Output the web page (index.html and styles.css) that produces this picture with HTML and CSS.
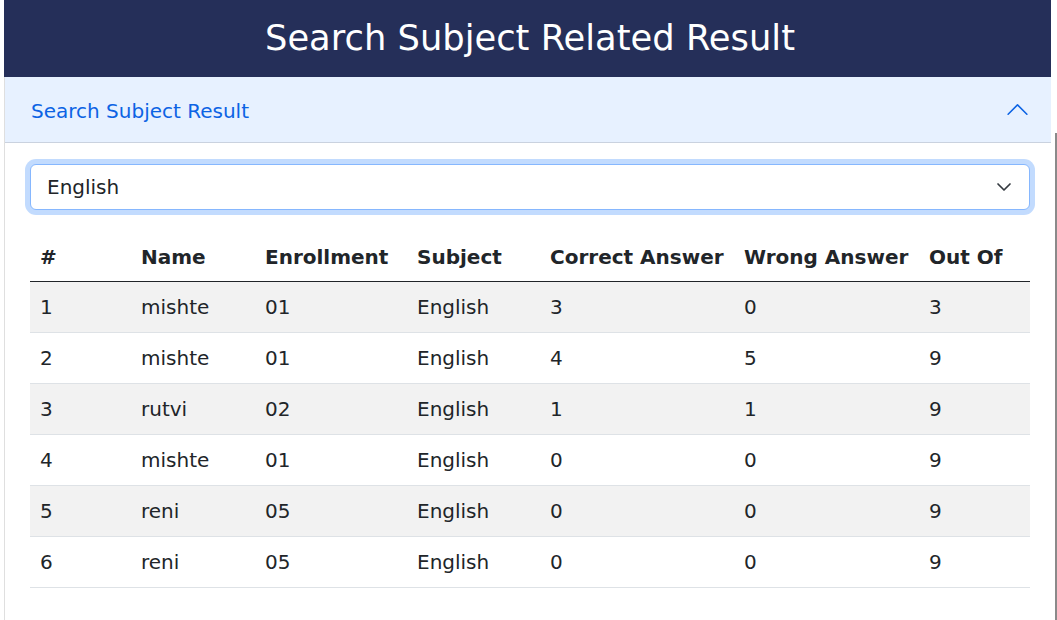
FILE: index.html
```html
<!DOCTYPE html>
<html lang="en">
<head>
<meta charset="utf-8">
<title>Search Subject Related Result</title>
<link rel="stylesheet" href="styles.css">
</head>
<body>
<div class="page">
  <main class="main">
    <header class="banner">
      <h1 class="banner-title">Search Subject Related Result</h1>
    </header>
    <section class="accordion-item">
      <button class="accordion-button" type="button">
        <span class="accordion-label">Search Subject Result</span>
        <svg class="accordion-icon" viewBox="0 0 16 16" width="25" height="25" aria-hidden="true">
          <path fill="#0c63e4" fill-rule="evenodd" d="M1.646 11.354a.5.5 0 0 0 .708 0L8 5.707l5.646 5.647a.5.5 0 0 0 .708-.708l-6-6a.5.5 0 0 0-.708 0l-6 6a.5.5 0 0 0 0 .708z"/>
        </svg>
      </button>
      <div class="accordion-body">
        <div class="select-wrap">
          <select class="form-select">
            <option>English</option>
          </select>
          <svg class="select-icon" viewBox="0 0 16 12" width="16" height="12" aria-hidden="true">
            <path fill="none" stroke="#343a40" stroke-linecap="round" stroke-linejoin="round" stroke-width="1.7" d="M2 3l6 6 6-6"/>
          </svg>
        </div>
        <table class="result-table">
          <colgroup>
            <col class="c-num"><col class="c-name"><col class="c-enr"><col class="c-sub"><col class="c-cor"><col class="c-wr"><col class="c-out">
          </colgroup>
          <thead>
            <tr><th>#</th><th>Name</th><th>Enrollment</th><th>Subject</th><th>Correct Answer</th><th>Wrong Answer</th><th>Out Of</th></tr>
          </thead>
          <tbody>
            <tr><td>1</td><td>mishte</td><td>01</td><td>English</td><td>3</td><td>0</td><td>3</td></tr>
            <tr><td>2</td><td>mishte</td><td>01</td><td>English</td><td>4</td><td>5</td><td>9</td></tr>
            <tr><td>3</td><td>rutvi</td><td>02</td><td>English</td><td>1</td><td>1</td><td>9</td></tr>
            <tr><td>4</td><td>mishte</td><td>01</td><td>English</td><td>0</td><td>0</td><td>9</td></tr>
            <tr><td>5</td><td>reni</td><td>05</td><td>English</td><td>0</td><td>0</td><td>9</td></tr>
            <tr><td>6</td><td>reni</td><td>05</td><td>English</td><td>0</td><td>0</td><td>9</td></tr>
          </tbody>
        </table>
      </div>
    </section>
  </main>
  <div class="gutter"><div class="gutter-bar"></div></div>
</div>
</body>
</html>
```

FILE: styles.css
```css
* { box-sizing: border-box; }
html, body { margin: 0; padding: 0; background: #fff; }
body {
  font-family: "DejaVu Sans", Verdana, sans-serif;
  font-size: 20px;
  color: #212529;
  overflow: hidden;
}
.page {
  display: flex;
  padding-left: 4px;
  min-height: 620px;
}
.main {
  width: 1047px;
  flex: none;
}
.gutter {
  flex: 1;
  display: flex;
  padding-left: 4px;
}
.gutter-bar {
  width: 2px;
  margin-top: 133px;
  background: #8a8a8a;
}
.banner {
  height: 77px;
  background: #252f59;
  display: flex;
  align-items: center;
  justify-content: center;
}
.banner-title {
  margin: 0;
  color: #fff;
  font-weight: 400;
  font-size: 35.3px;
  line-height: 1.2;
  padding-left: 5px;
  padding-top: 0;
}
.accordion-item {
  border: 1px solid rgba(0,0,0,.125);
  border-top: 0;
  border-right: 0;
  min-height: 560px;
}
.accordion-button {
  display: flex;
  align-items: center;
  width: 100%;
  height: 66px;
  padding: 2px 21px 0 26px;
  border: 0;
  background: #e7f1ff;
  color: #0c63e4;
  box-shadow: inset 0 -1px 0 rgba(0,0,0,.125);
  font-family: inherit;
  font-size: 20px;
  line-height: 30px;
  text-align: left;
  cursor: pointer;
}
.accordion-label { flex: 1; }
.accordion-icon { flex: none; margin-top: -3px; }
.accordion-body {
  padding: 21px 21px 20px 25px;
}
.select-wrap {
  position: relative;
  width: 1000px;
  margin-bottom: 21px;
}
.form-select {
  display: block;
  width: 100%;
  height: 46px;
  padding: 0 45px 0 16px;
  font-family: inherit;
  font-size: 20px;
  color: #212529;
  background: #fff;
  border: 1px solid #86b7fe;
  border-radius: 6px;
  box-shadow: 0 0 0 5px rgba(13,110,253,.25);
  -webkit-appearance: none;
  appearance: none;
  outline: none;
}
.select-icon {
  position: absolute;
  right: 18px;
  top: 17px;
}
.result-table {
  width: 1000px;
  table-layout: fixed;
  border-collapse: collapse;
}
.c-num { width: 101px; }
.c-name { width: 124px; }
.c-enr { width: 152px; }
.c-sub { width: 133px; }
.c-cor { width: 194px; }
.c-wr { width: 185px; }
.c-out { width: 111px; }
.result-table th,
.result-table td {
  padding: 10px 10px;
  line-height: 30px;
  text-align: left;
  white-space: nowrap;
}
.result-table th {
  font-weight: 700;
  border-bottom: 1px solid #212529;
  padding-top: 11px;
  padding-bottom: 9px;
}
.result-table td {
  border-bottom: 1px solid #dee2e6;
  padding-top: 10px;
  padding-bottom: 10px;
}
.result-table tbody tr:nth-child(odd) td { background: #f2f2f2; }
```
